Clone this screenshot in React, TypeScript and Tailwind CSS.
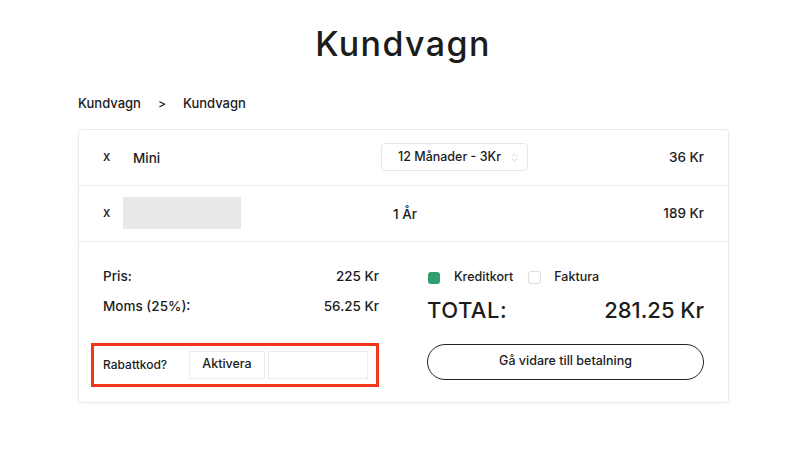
import { ChevronsUpDown } from "lucide-react";

const font = { fontFamily: "Inter, 'Noto Sans', sans-serif" };

type CartRowProps = {
  name?: string;
  middle: React.ReactNode;
  price: string;
};

const CartRow = ({ name, middle, price }: CartRowProps) => {
  return (
    <div className="flex h-[56px] items-center border-b border-[#efefef] px-6">
      <span className="w-[20px] text-[13px]">x</span>
      <div className="w-[258px]">
        {name ? (
          <span className="pl-[10px] text-[13.5px]">{name}</span>
        ) : (
          <div className="h-[32px] w-[118px] bg-[#e8e8e8]" />
        )}
      </div>
      <div className="w-[147px]">{middle}</div>
      <span className="flex-1 text-right text-[13.5px]">{price}</span>
    </div>
  );
};

const App = () => {
  return (
    <div
      className="h-[458px] w-[800px] bg-white font-medium text-[#1c1c1c]"
      style={font}
    >
      <h1 className="pl-[6px] pt-[24px] text-center text-[34px] font-medium leading-[40px] tracking-[1.4px]">
        Kundvagn
      </h1>

      <div className="ml-[78px] mt-[30px] flex items-center text-[13px]">
        <span>Kundvagn</span>
        <span className="mx-[17px] text-[12px]">&gt;</span>
        <span>Kundvagn</span>
      </div>

      <div className="ml-[78px] mt-[15px] w-[651px] rounded-[3px] border border-[#ebebeb] shadow-[0_1px_3px_rgba(0,0,0,0.04)]">
        <CartRow
          name="Mini"
          middle={
            <div className="relative flex h-[28px] items-center justify-center rounded-[4px] border border-[#e6e6e6] pr-[10px] text-[12.5px]">
              12 Månader - 3Kr
              <ChevronsUpDown
                className="absolute right-[7px] h-[11px] w-[11px] text-[#d0d0d0]"
                strokeWidth={2}
              />
            </div>
          }
          price="36 Kr"
        />
        <CartRow
          middle={<span className="pl-[12px] text-[13.5px]">1 År</span>}
          price="189 Kr"
        />

        <div className="flex px-6 pb-[15px] pt-[10px]">
          <div className="w-[277px] pt-[14px]">
            <div className="flex justify-between text-[13.5px] leading-[20px]">
              <span>Pris:</span>
              <span>225 Kr</span>
            </div>
            <div className="mt-[10px] flex justify-between text-[13.5px] leading-[20px]">
              <span>Moms (25%):</span>
              <span>56.25 Kr</span>
            </div>
            <div className="-ml-3 mt-[27px] flex h-[44px] w-[288px] items-center border-[3px] border-[#f0361b] pl-[9px]">
              <span className="w-[86px] text-[12px]">Rabattkod?</span>
              <button className="h-[28px] w-[76px] border border-[#ececec] text-[12.5px]">
                Aktivera
              </button>
              <input className="ml-[3px] h-[28px] w-[100px] border border-[#ececec] outline-none" />
            </div>
          </div>

          <div className="mx-6 w-px bg-[#efefef]" />

          <div className="w-[277px] pt-[16px]">
            <div className="flex h-[20px] items-center text-[12.5px]">
              <span className="ml-[1px] h-[12px] w-[12px] rounded-[3px] bg-[#2e9e6f]" />
              <span className="ml-[14px]">Kreditkort</span>
              <span className="ml-[15px] h-[13px] w-[13px] rounded-[3px] border border-[#dcdcdc]" />
              <span className="ml-[13px]">Faktura</span>
            </div>
            <div className="mt-[8px] flex justify-between text-[22px] leading-[28px]">
              <span className="tracking-[0.5px]">TOTAL:</span>
              <span>281.25 Kr</span>
            </div>
            <button className="mt-[20px] flex h-[36px] w-[277px] items-center justify-center rounded-full border-[1.5px] border-[#222] text-[12.5px]">
              Gå vidare till betalning
            </button>
          </div>
        </div>
      </div>
    </div>
  );
};

export default App;
